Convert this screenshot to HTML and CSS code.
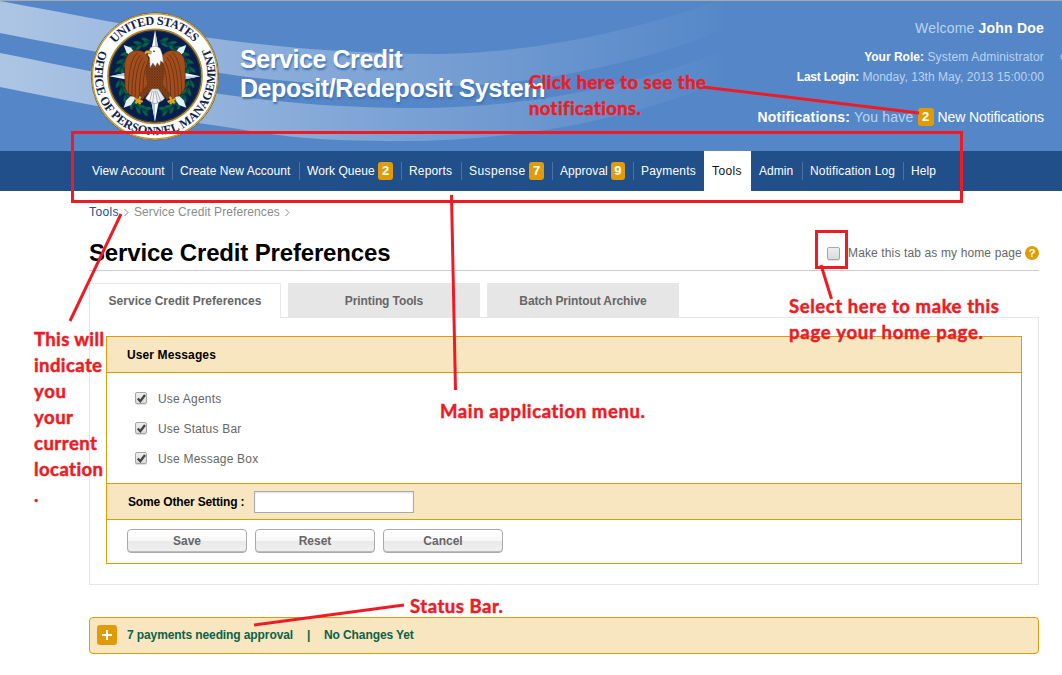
FILE: index.html
```html
<!DOCTYPE html>
<html lang="en">
<head>
<meta charset="utf-8">
<title>Service Credit Preferences</title>
<link rel="stylesheet" href="styles.css">
</head>
<body>
<div class="page">
<header class="banner">
  <svg class="swoosh" width="1062" height="150" viewBox="0 1 1062 150">
    <defs><linearGradient id="fade" gradientUnits="userSpaceOnUse" x1="0" y1="0" x2="730" y2="0"><stop offset="0" stop-color="#fff" stop-opacity=".52"/><stop offset=".5" stop-color="#fff" stop-opacity=".25"/><stop offset=".85" stop-color="#fff" stop-opacity=".07"/><stop offset="1" stop-color="#fff" stop-opacity="0"/></linearGradient></defs>
    <path fill="url(#fade)" d="M0 1 C70 14 140 28 210 38 S360 54 430 54 S610 42 730 -4 V28 C620 70 520 86 440 86 S290 84 220 73 S70 47 0 33Z"/>
    <path fill="url(#fade)" d="M0 53 C70 67 150 84 220 94 S350 108 420 108 S610 97 730 48 V77 C630 122 510 141 400 141 S270 133 205 124 S70 101 0 87Z"/>
    <path d="M1064 53 Q1058 57 1064 61" fill="none" stroke="#a9c6ea" stroke-width="1.2"/>
  </svg>
  <svg class="seal" width="150" height="140" viewBox="0 0 450 420">
    <defs>
      <path id="arc-top" d="M105 116 A155 155 0 0 1 345 116"/>
      <path id="arc-bottom" d="M60 135 A181 181 0 1 0 390 135"/>
      <linearGradient id="tail" x1="0" x2="1"><stop offset="0" stop-color="#fff"/><stop offset="1" stop-color="#dce6ef"/></linearGradient>
      <pattern id="scales" width="8" height="8" patternUnits="userSpaceOnUse"><rect width="8" height="8" fill="#94491b"/><path d="M0 0 Q4 8 8 0 M-4 4 Q0 12 4 4 Q8 12 12 4" fill="none" stroke="#4b250f" stroke-width="1.6"/></pattern>
      <g id="leaf"><path d="M225 108 Q236 92 250 94 Q248 107 225 108Z M225 108 Q236 126 252 122 Q248 108 225 108Z M222 107 Q234 101 246 107 Q234 115 222 107Z"/></g>
      <g id="laurel"><use href="#leaf" transform="rotate(8 225 214)"/><use href="#leaf" transform="rotate(21 225 214)"/><use href="#leaf" transform="rotate(34 225 214)"/><use href="#leaf" transform="rotate(47 225 214)"/><use href="#leaf" transform="rotate(60 225 214)"/><use href="#leaf" transform="rotate(73 225 214)"/><use href="#leaf" transform="rotate(95 225 214)"/><use href="#leaf" transform="rotate(108 225 214)"/><use href="#leaf" transform="rotate(121 225 214)"/><use href="#leaf" transform="rotate(134 225 214)"/><use href="#leaf" transform="rotate(147 225 214)"/><use href="#leaf" transform="rotate(158 225 214)"/></g>
    </defs>
    <circle cx="225" cy="214" r="191" fill="#fff" stroke="#6f6242" stroke-width="3"/>
    <circle cx="225" cy="214" r="187.500" fill="none" stroke="#c39a32" stroke-width="4"/>
    <circle cx="225" cy="214" r="141" fill="#071d4c" stroke="#b38b2c" stroke-width="5"/>
    <circle cx="225" cy="214" r="137" fill="none" stroke="#4c4b43" stroke-width="2"/>
    <g fill="#08634a" stroke="#063c3f"><use href="#laurel"/><use href="#laurel" transform="translate(450 0) scale(-1 1)"/></g>
    <g fill="#e8f0f7">
      <path d="M131 120 L153 128 L207 205 L139 142Z"/><path d="M319 120 L297 128 L243 205 L311 142Z"/>
      <path d="M131 308 L139 286 L207 223 L153 300Z"/><path d="M319 308 L311 286 L243 223 L297 300Z"/>
    </g>
    <path fill="#fff" d="M225 76 L204 190 L89 214 L204 236 L225 350 L246 236 L361 214 L246 190Z"/>
    <path fill="#b6cbdc" d="M225 76 L246 190 L225 214Z M361 214 L246 236 L225 214Z M225 350 L204 236 L225 214Z M89 214 L204 190 L225 214Z"/>
    <g fill="#a34d1c" stroke="#552a12" stroke-width="2">
      <path d="M207 164 C202 145 187 134 168 137 C145 140 134 158 134 183 L135 247 L140 261 L146 266 L153 273 L162 274 L170 281 L184 276 L196 263 L207 230Z"/>
      <path d="M243 164 C248 145 263 134 282 137 C305 140 316 158 316 183 L315 247 L310 261 L304 266 L297 273 L288 274 L280 281 L266 276 L254 263 L243 230Z"/>
      <path fill="none" d="M174 143 Q145 162 145 265 M181 150 Q156 175 155 273 M189 157 Q165 185 165 277 M195 168 Q177 198 178 276 M201 178 Q188 208 189 266 M276 143 Q305 162 305 265 M269 150 Q294 175 295 273 M261 157 Q285 185 285 277 M255 168 Q273 198 272 276 M249 178 Q262 208 261 266"/>
    </g>
    <path fill="url(#scales)" stroke="#552a12" d="M204 163 L247 163 L252 206 L247 238 L267 263 L275 276 L262 284 L246 264 L225 254 L204 264 L187 284 L175 276 L183 263 L203 238 L198 206Z"/>
    <path fill="url(#tail)" stroke="#8b938f" stroke-width="2" d="M216 252 L197 280 L203 286 L209 289 L218 294 L225 296 L233 294 L242 289 L248 286 L254 280 L235 252Z M217 257 L209 289 M222 257 L218 294 M226 257 L233 294 M230 257 L242 289"/>
    <path fill="#fff" stroke="#7e7770" stroke-width="1.500" d="M211 128 Q227 119 240 130 Q249 147 250 173 L242 168 L239 183 L232 173 L226 185 L219 174 L210 188 L209 158 L203 150Z"/>
    <path fill="#e9b526" stroke="#835c16" stroke-width="1.500" d="M214 138 Q199 134 194 141 L195 150 L201 145 L213 147Z"/><circle cx="222" cy="139" r="2.500" fill="#111"/>
    <path fill="none" stroke="#d9a51f" stroke-width="7" stroke-linejoin="round" d="M181 275 L176 287 L163 281 M176 287 L166 294 M176 287 L180 298 M176 285 L188 291 M270 275 L275 287 L288 281 M275 287 L284 294 M275 287 L271 298 M275 285 L263 291"/>
    <g class="seal-text"><text><textPath href="#arc-top" textLength="270">UNITED STATES</textPath></text><text><textPath href="#arc-bottom" textLength="728">OFFICE OF PERSONNEL MANAGEMENT</textPath></text></g>
  </svg>
  <div class="brand">Service Credit<br>Deposit/Redeposit System</div>
  <div class="account">
    <div class="welcome">Welcome <b>John Doe</b></div>
    <div class="role"><b>Your Role:</b> System Administrator</div>
    <div class="login"><b>Last Login:</b> Monday, 13th May, 2013 15:00:00</div>
    <div class="notices"><span class="have"><b>Notifications:</b> You have</span><span class="badge wide">2</span><span class="new">New Notifications</span></div>
  </div>
</header>
<nav class="menu">
  <a class="item w-view">View Account</a><a class="item w-create">Create New Account</a><a class="item w-queue">Work Queue <span class="badge">2</span></a><a class="item w-reports">Reports</a><a class="item w-suspense">Suspense <span class="badge">7</span></a><a class="item w-approval">Approval <span class="badge">9</span></a><a class="item w-payments plain">Payments</a><a class="item w-tools active">Tools</a><a class="item w-admin">Admin</a><a class="item w-log">Notification Log</a><a class="item plain">Help</a>
</nav>
<main class="content">
  <div class="crumbs"><a class="crumb-link">Tools</a><svg width="5" height="9" viewBox="0 0 5 9"><path d="M.5 1 L4 4.500 L.5 8"/></svg><span class="crumb-here">Service Credit Preferences</span><svg width="5" height="9" viewBox="0 0 5 9"><path d="M.5 1 L4 4.500 L.5 8"/></svg></div>
  <div class="heading">
    <h1>Service Credit Preferences</h1>
    <label class="home"><span class="check"></span><span class="home-text">Make this tab as my home page</span><span class="help">?</span></label>
  </div>
  <div class="tabs"><div class="tab current">Service Credit Preferences</div><div class="tab">Printing Tools</div><div class="tab">Batch Printout Archive</div></div>
  <section class="panel">
    <div class="settings">
      <div class="bar title">User Messages</div>
      <div class="options">
        <label class="option"><span class="check"><svg width="11" height="11" viewBox="0 0 11 11"><path d="M1.800 5.500 L4.300 8.200 L9 2"/></svg></span>Use Agents</label>
        <label class="option"><span class="check"><svg width="11" height="11" viewBox="0 0 11 11"><path d="M1.800 5.500 L4.300 8.200 L9 2"/></svg></span>Use Status Bar</label>
        <label class="option"><span class="check"><svg width="11" height="11" viewBox="0 0 11 11"><path d="M1.800 5.500 L4.300 8.200 L9 2"/></svg></span>Use Message Box</label>
      </div>
      <div class="bar other"><span class="other-label">Some Other Setting :</span><input class="field" type="text"></div>
      <div class="actions"><button class="button">Save</button><button class="button">Reset</button><button class="button">Cancel</button></div>
    </div>
  </section>
  <footer class="status"><span class="plus"><svg width="12" height="12" viewBox="0 0 12 12"><path d="M6 1 V11 M1 6 H11"/></svg></span><span class="payments">7 payments needing approval</span><span class="divider">|</span><span class="changes">No Changes Yet</span></footer>
</main>
<svg class="notes" width="1062" height="675" viewBox="0 0 1062 675">
  <g class="note-lines">
    <rect x="72.500" y="132.500" width="889" height="69"/><rect x="816.500" y="231.500" width="30" height="36"/>
    <path d="M703 87 L919 113 M121 214 L70 321 M451.500 195 L455.500 390 M821 265 L831.500 299 M254 625 L404 605"/>
  </g>
  <g class="note-text">
    <text x="529" y="89" textLength="177">Click here to see the</text><text x="529" y="115" textLength="112">notifications.</text>
    <text x="34" y="346" textLength="70">This will</text><text x="34" y="372" textLength="68">indicate</text><text x="34" y="398" textLength="32">you</text><text x="34" y="424" textLength="39">your</text><text x="34" y="450" textLength="63">current</text><text x="34" y="476" textLength="69">location</text><text x="34" y="502">.</text>
    <text x="789" y="313" textLength="210">Select here to make this</text><text x="789" y="339" textLength="194">page your home page.</text>
    <text x="440" y="418" textLength="205">Main application menu.</text><text x="410" y="613" textLength="93">Status Bar.</text>
  </g>
</svg>
</div>
</body>
</html>
```
FILE: styles.css
```css
* { box-sizing: border-box; }
body { margin: 0; background: #fff; font: 12px/16px "Liberation Sans", Arial, sans-serif; color: #666; }
.page { position: relative; width: 1062px; height: 675px; overflow: hidden; }
.banner { position: relative; display: flex; height: 151px; border-top: 1px solid #aaa; background: #5587c8; }
.swoosh { position: absolute; left: 0; top: 0; }
.seal { position: relative; flex: none; margin: 4px 0 0 80px; }
.seal-text { font: bold 37px "Liberation Serif", serif; fill: #10234f; }
.brand { position: relative; width: 320px; margin: 44px 0 0 10px; font-weight: bold; font-size: 25px; line-height: 29px; letter-spacing: -.43px; color: #fff; white-space: nowrap; text-shadow: 1px 2px 2px #3f70b0; }
.account { position: relative; margin-left: auto; padding: 19px 18px 0 0; color: #bbd3f0; text-align: right; white-space: nowrap; }
.account b, .new { color: #fff; }
.welcome { font-size: 14px; letter-spacing: .2px; }
.role { margin-top: 13px; letter-spacing: .16px; }
.role b { letter-spacing: 0; }
.login { margin-top: 4px; letter-spacing: .04px; }
.login b { letter-spacing: -.22px; }
.notices { display: flex; justify-content: flex-end; gap: 4px; margin-top: 23px; font-size: 14px; line-height: 18px; }
.have { letter-spacing: .22px; }
.new { letter-spacing: -.1px; }
.badge { display: inline-block; width: 15px; height: 18px; border-radius: 3px; background: #e09c08; color: #fff; font-weight: bold; font-size: 13px; line-height: 18px; text-align: center; }
.wide { width: 16px; }
.menu { display: flex; align-items: center; height: 40px; padding-left: 84px; background: #204f8a; color: #fff; }
.item { display: flex; align-items: center; gap: 3px; height: 18px; padding: 0 8px 0 7px; border-right: 1px solid #4d72a2; letter-spacing: .06px; white-space: nowrap; }
.item .badge { margin-left: auto; letter-spacing: 0; }
.plain { border: 0; }
.w-view { width: 89px; padding-left: 8px; } .w-create { width: 127px; } .w-queue { width: 102px; } .w-reports { width: 60px; letter-spacing: .15px; }
.w-suspense { width: 91px; letter-spacing: .4px; } .w-approval { width: 81px; } .w-payments { width: 70px; letter-spacing: .2px; } .w-tools { width: 47px; padding-left: 8px; letter-spacing: .4px; }
.w-admin { width: 52px; padding-left: 8px; } .w-log { width: 101px; letter-spacing: .15px; }
.active { height: 40px; border: 0; background: #fff; color: #111; }
.content { width: 950px; margin-left: 89px; padding-top: 13px; }
.crumbs { display: flex; align-items: center; height: 16px; color: #8b8b8b; }
.crumbs svg { margin: 1px 5px 0; fill: none; stroke: #888; }
.crumb-link { color: #204f8a; letter-spacing: .4px; }
.crumb-here { letter-spacing: .09px; }
.heading { display: flex; align-items: center; justify-content: space-between; height: 51px; padding-top: 16px; border-bottom: 1px solid #ccc; }
h1 { margin: 0; color: #000; font-size: 24px; line-height: 28px; letter-spacing: -.16px; white-space: nowrap; }
.home { display: flex; align-items: center; white-space: nowrap; }
.home-text { width: 174px; margin: 0 3px 0 8px; letter-spacing: .13px; }
.check { display: flex; align-items: center; justify-content: center; width: 13px; height: 13px; border: 1px solid #a5a5a5; border-radius: 2px; background: linear-gradient(#eee, #dadada); box-shadow: 0 1px 1px #ddd; }
.check svg { flex: none; fill: none; stroke: #444; stroke-width: 2.300; }
.help { width: 14px; height: 14px; border-radius: 50%; background: #e09c08; color: #fff; font-weight: bold; font-size: 11px; line-height: 14px; text-align: center; }
.tabs { display: flex; gap: 7px; margin-top: 12px; }
.tab { width: 192px; height: 34px; background: #e6e6e6; font-weight: bold; line-height: 36px; letter-spacing: -.1px; text-align: center; }
.current { position: relative; height: 35px; margin-bottom: -1px; border: 1px solid #e6e6e6; border-bottom: 0; background: #fff; line-height: 34px; letter-spacing: 0; }
.panel { height: 268px; padding: 18px 16px; border: 1px solid #e6e6e6; }
.settings { height: 228px; border: 1px solid #e09c08; }
.bar { display: flex; align-items: center; height: 36px; padding-left: 20px; border-bottom: 1px solid #e09c08; background: #f8e6c1; color: #000; font-weight: bold; }
.title { letter-spacing: .12px; }
.options { display: grid; align-content: start; row-gap: 14px; height: 110px; padding: 18px 28px; }
.option { display: flex; align-items: center; gap: 11px; letter-spacing: .2px; }
.option .check { width: 12px; height: 12px; margin-bottom: 2px; }
.other { height: 37px; padding-left: 21px; border-top: 1px solid #e09c08; }
.other-label { width: 126px; letter-spacing: -.15px; }
.field { width: 160px; height: 22px; border: 1px solid #aaa; box-shadow: inset 0 1px 2px #ddd; }
.actions { display: flex; gap: 8px; padding: 9px 20px; }
.button { width: 120px; height: 24px; padding: 0; border: 1px solid #aaa; border-radius: 4px; background: linear-gradient(#fff 0, #f7f7f7 48%, #eaeaea 52%, #efefef 100%); box-shadow: inset 0 -1px 0 #bbb; color: #666; font: bold 12px/20px "Liberation Sans", Arial, sans-serif; }
.status { display: flex; align-items: center; height: 37px; margin-top: 32px; padding: 0 0 1px 7px; border: 1px solid #e09c08; border-radius: 4px; background: #f8e6c1; color: #08634a; font-weight: bold; letter-spacing: -.1px; }
.plus { display: flex; align-items: center; justify-content: center; width: 20px; height: 20px; margin-right: 10px; border-radius: 3px; background: #e09c08; }
.plus svg { stroke: #fff; stroke-width: 2; }
.divider { width: 31px; text-align: center; }
.notes { position: absolute; left: 0; top: 0; pointer-events: none; }
.note-lines { fill: none; stroke: #ed1c24; stroke-width: 3; }
.note-text { fill: #ed1c24; stroke: #ed1c24; stroke-width: .5; font: bold 18.5px Lato, sans-serif; font-variant-ligatures: none; }
```
